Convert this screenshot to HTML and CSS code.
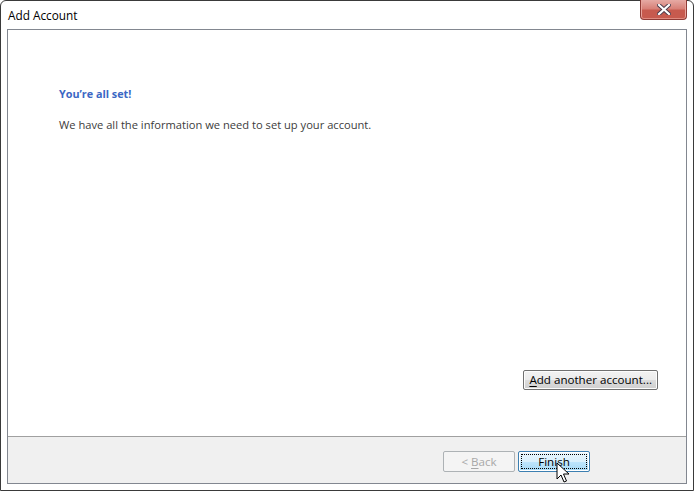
FILE: index.html
```html
<!DOCTYPE html>
<html lang="en">
<head>
  <meta charset="UTF-8">
  <title>Add Account</title>
  <link rel="stylesheet" href="styles.css">
</head>
<body>
  <div class="window">
    <div class="titlebar">
      <span class="titlebar__text">Add Account</span>
      <button class="titlebar__close" aria-label="Close">
        <svg width="14" height="11" viewBox="0 0 14 11">
          <path d="M2 1 L12 10 M12 1 L2 10" stroke="#4a3a4a" stroke-width="4" stroke-linecap="square"/>
          <path d="M2 1 L12 10 M12 1 L2 10" stroke="#fff" stroke-width="2.2" stroke-linecap="square"/>
        </svg>
      </button>
    </div>

    <div class="panel">
      <div class="panel__body">
        <h1 class="panel__title">You’re all set!</h1>
        <p class="panel__text">We have all the information we need to set up your account.</p>
        <div class="panel__spacer"></div>
        <div class="panel__actions">
          <button class="btn"><u>A</u>dd another account...</button>
        </div>
      </div>
      <div class="panel__footer">
        <button class="btn btn--wide" disabled>&lt; <u>B</u>ack</button>
        <button class="btn btn--wide btn--default"><span class="btn__focus">Finish</span></button>
      </div>
    </div>

    <!-- курсор -->
    <svg class="cursor" width="14" height="22" viewBox="0 0 14 22">
      <path d="M1 1 L1 17 L5 13 L8 20 L10.5 19 L7.5 12 L13 12 Z" fill="#fff" stroke="#000" stroke-width="1" stroke-linejoin="miter"/>
    </svg>
  </div>
</body>
</html>
```

FILE: styles.css
```css
html, body {
  margin: 0;
  height: 100%;
  overflow: hidden;
  background: #fff;
}

body {
  font-family: "Open Sans", "Noto Sans", sans-serif;
  font-size: 11.15px;
}

.window {
  position: relative;
  box-sizing: border-box;
  width: 694px;
  height: 491px;
  border: 1px solid #3a3a3a;
  border-radius: 6px 6px 0 0;
  background: #fff;
  display: flex;
  flex-direction: column;
  padding: 0 6px 6px 6px;
}

.titlebar {
  height: 28px;
  display: flex;
  align-items: flex-start;
  justify-content: space-between;
}

.titlebar__text {
  margin: 6px 0 0 1px;
  font-size: 11.8px;
  color: #000;
  line-height: 16px;
}

.titlebar__close {
  width: 47px;
  height: 20px;
  margin: -1px 0 0 0;
  padding: 0;
  border: 1px solid #8f3b36;
  border-top: 0;
  border-radius: 0 0 4px 4px;
  background: linear-gradient(#e6aaa4 0%, #d88178 45%, #c75a4e 55%, #c75a4e 100%);
  box-shadow: inset 0 -1px 0 #e08b80, inset 1px 0 0 #e8a49c, inset -1px 0 0 #e8a49c;
  display: flex;
  align-items: center;
  justify-content: center;
}

.panel {
  flex: 1;
  display: flex;
  flex-direction: column;
  border: 1px solid #828790;
}

.panel__body {
  flex: 1;
  display: flex;
  flex-direction: column;
  padding: 56px 28px 46px 51px;
  border-bottom: 1px solid #a0a0a0;
}

.panel__title {
  margin: 0;
  font-size: 10.8px;
  font-weight: bold;
  color: #3b67c4;
  line-height: 16px;
}

.panel__text {
  margin: 15px 0 0;
  color: #3c3c3c;
  line-height: 16px;
}

.panel__spacer { flex: 1; }

.panel__actions {
  display: flex;
  justify-content: flex-end;
}

.panel__footer {
  height: 46px;
  background: #f0f0f0;
  display: flex;
  justify-content: flex-end;
  align-items: flex-start;
  gap: 3px;
  padding: 14px 96px 0 0;
  box-sizing: border-box;
}

.btn {
  box-sizing: border-box;
  height: 20px;
  padding: 0 5px;
  font-family: inherit;
  font-size: 11.6px;
  color: #000;
  border: 1px solid #707070;
  border-radius: 2px;
  background: linear-gradient(#f2f2f2 0%, #ebebeb 50%, #dddddd 51%, #cfcfcf 100%);
  box-shadow: inset 0 0 0 1px #fcfcfc;
  line-height: 16px;
}

.btn u { text-decoration: underline; text-underline-offset: 2px; }

.btn--wide { width: 72px; height: 21px; padding: 0; }

.btn:disabled {
  color: #a8a8a8;
  border-color: #adb2b5;
  background: #f4f4f4;
  box-shadow: none;
}

.btn--default {
  border-color: #3c7fb1;
  background: linear-gradient(#eaf6fd 0%, #d9f0fc 50%, #bee6fd 51%, #a7d9f5 100%);
  box-shadow: inset 0 0 0 1px #fff;
  padding: 2px;
}

.btn__focus {
  display: block;
  height: 100%;
  box-sizing: border-box;
  border: 1px dotted #000;
  line-height: 13px;
}

.cursor {
  position: absolute;
  left: 555px;
  top: 461px;
}
```
